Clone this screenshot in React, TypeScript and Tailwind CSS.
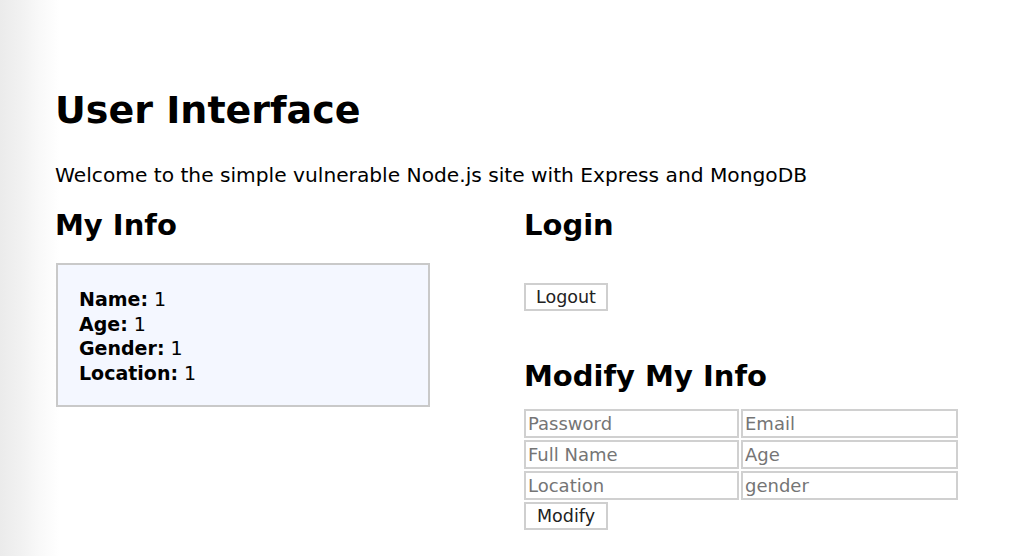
import React from 'react';

const info = [
  { label: 'Name', value: '1' },
  { label: 'Age', value: '1' },
  { label: 'Gender', value: '1' },
  { label: 'Location', value: '1' },
];

const fields = ['Password', 'Email', 'Full Name', 'Age', 'Location', 'gender'];

const App: React.FC = () => {
  return (
    <div className="min-h-[556px] w-[1032px] overflow-hidden bg-[linear-gradient(to_right,#ebebeb_0px,#f1f1f1_20px,#f9f9f9_40px,#ffffff_60px)] font-['DejaVu_Sans',sans-serif] text-black">
      <div className="pl-[55px] pt-[86px]">
        <h1 className="m-0 text-[38px] font-bold leading-[48px]">User Interface</h1>
        <p className="mt-[29px] text-[20.2px] leading-[24px]">
          Welcome to the simple vulnerable Node.js site with Express and MongoDB
        </p>
        <div className="mt-[20px] flex">
          <div className="w-[469px]">
            <h2 className="text-[29px] font-bold leading-[36px]">My Info</h2>
            <div className="ml-[1px] mt-[20px] h-[144px] w-[374px] border-2 border-[#c9c9c9] bg-[#f4f7ff] px-[21px] pt-[22px] text-[19px] leading-[24.5px]">
              {info.map((row) => (
                <div key={row.label}>
                  <span className="font-bold">{row.label}:</span> {row.value}
                </div>
              ))}
            </div>
          </div>
          <div className="w-[434px]">
            <h2 className="text-[29px] font-bold leading-[36px]">Login</h2>
            <button className="mt-[40px] h-[28px] w-[84px] border-2 border-[#cfcfcf] bg-white text-[17.5px] leading-[22px] text-[#222]">
              Logout
            </button>
            <h2 className="mt-[47px] text-[29px] font-bold leading-[36px]">Modify My Info</h2>
            <div className="mt-[15px] grid grid-cols-[215px_217px] gap-x-[2px] gap-y-[2px]">
              {fields.map((f) => (
                <input
                  key={f}
                  placeholder={f}
                  className="h-[29px] border-2 border-[#d0d0d0] bg-white px-[2px] text-[18px] placeholder:text-[#757575] outline-none"
                />
              ))}
            </div>
            <button className="mt-[2px] h-[28px] w-[84px] border-2 border-[#cfcfcf] bg-white text-[17.5px] leading-[22px] text-[#222]">
              Modify
            </button>
          </div>
        </div>
      </div>
    </div>
  );
};

export default App;
